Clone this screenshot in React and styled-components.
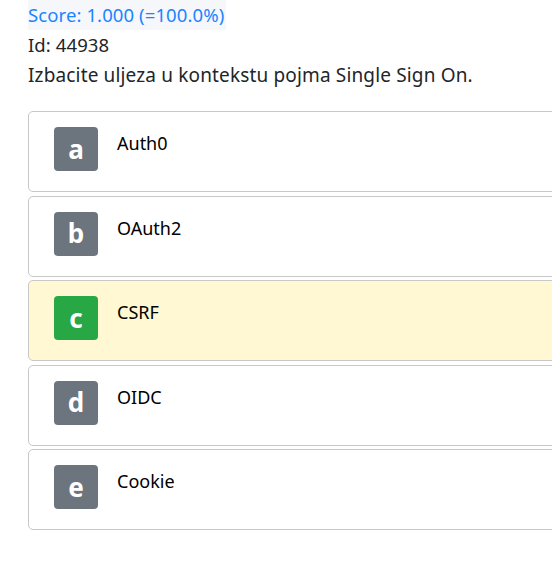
import styled, { createGlobalStyle } from "styled-components";

const GlobalStyle = createGlobalStyle`
  body {
    margin: 0;
    background: #fff;
    font-family: "Noto Sans", "Open Sans", sans-serif;
    color: #212529;
    overflow: hidden;
  }
`;

const answers = [
  { letter: "a", text: "Auth0" },
  { letter: "b", text: "OAuth2" },
  { letter: "c", text: "CSRF", correct: true },
  { letter: "d", text: "OIDC" },
  { letter: "e", text: "Cookie" },
];

function App() {
  return (
    <>
      <GlobalStyle />
      <Page>
        <Score>Score: 1.000 (=100.0%)</Score>
        <Line>Id: 44938</Line>
        <Line $wide>Izbacite uljeza u kontekstu pojma Single Sign On.</Line>
        <AnswerList>
          {answers.map((a) => (
            <AnswerCard key={a.letter} $correct={a.correct}>
              <Badge $correct={a.correct}>{a.letter}</Badge>
              <AnswerText>{a.text}</AnswerText>
            </AnswerCard>
          ))}
        </AnswerList>
      </Page>
    </>
  );
}

const Page = styled.div`
  width: 560px;
  padding: 0 0 0 28px;
  display: flex;
  flex-direction: column;
  align-items: flex-start;
  font-size: 18.5px;
`;

const Score = styled.span`
  color: #1a85ff;
  background: #f6f7fa;
  line-height: 30px;
  padding-right: 2px;
  letter-spacing: 0.1px;
`;

const Line = styled.div`
  line-height: 30px;
  font-size: ${(p) => (p.$wide ? "19px" : "18.5px")};
  letter-spacing: ${(p) => (p.$wide ? "0.15px" : "0.1px")};
`;

const AnswerList = styled.div`
  margin-top: 21px;
  display: flex;
  flex-direction: column;
  gap: 3.5px;
  width: 100%;
`;

const AnswerCard = styled.div`
  display: flex;
  align-items: flex-start;
  gap: 19px;
  height: 81px;
  box-sizing: border-box;
  padding: 15px 0 0 25px;
  border: 1px solid #c8c8c8;
  border-radius: 5px;
  background: ${(p) => (p.$correct ? "#fff8d2" : "#fff")};
`;

const Badge = styled.div`
  width: 44px;
  height: 44px;
  border-radius: 4px;
  background: ${(p) => (p.$correct ? "#28a745" : "#6c757d")};
  color: #fff;
  font-weight: 700;
  font-size: 26px;
  display: flex;
  align-items: center;
  justify-content: center;
  line-height: 1;
  padding-bottom: 1px;
  box-sizing: border-box;
`;

const AnswerText = styled.div`
  font-size: 18px;
  line-height: 30px;
  margin-top: 1px;
  color: #000;
`;

export default App;
